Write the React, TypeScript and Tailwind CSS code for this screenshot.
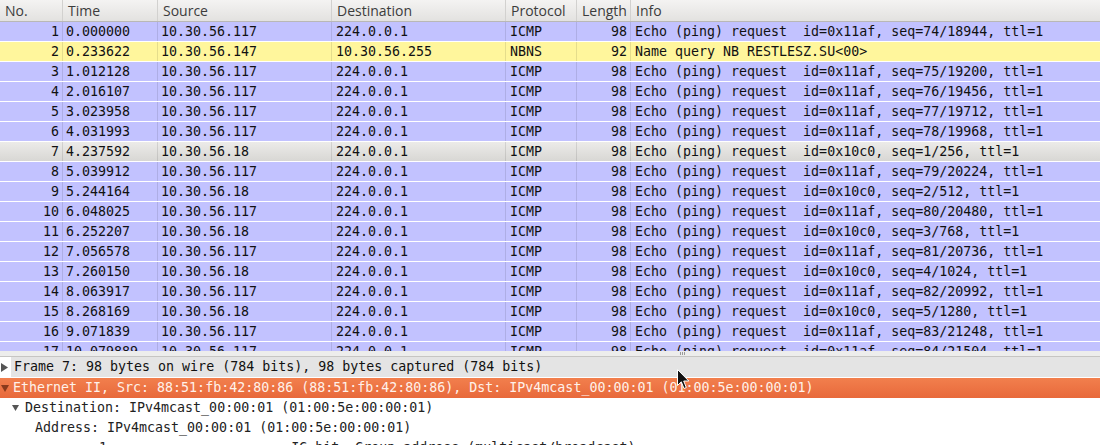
import React from "react";

type Row = { no: number; time: string; src: string; dst: string; proto: string; len: number; info: string; kind: "icmp" | "nbns" | "sel" };

const rows: Row[] = [
  { no: 1, time: "0.000000", src: "10.30.56.117", dst: "224.0.0.1", proto: "ICMP", len: 98, info: "Echo (ping) request  id=0x11af, seq=74/18944, ttl=1", kind: "icmp" },
  { no: 2, time: "0.233622", src: "10.30.56.147", dst: "10.30.56.255", proto: "NBNS", len: 92, info: "Name query NB RESTLESZ.SU<00>", kind: "nbns" },
  { no: 3, time: "1.012128", src: "10.30.56.117", dst: "224.0.0.1", proto: "ICMP", len: 98, info: "Echo (ping) request  id=0x11af, seq=75/19200, ttl=1", kind: "icmp" },
  { no: 4, time: "2.016107", src: "10.30.56.117", dst: "224.0.0.1", proto: "ICMP", len: 98, info: "Echo (ping) request  id=0x11af, seq=76/19456, ttl=1", kind: "icmp" },
  { no: 5, time: "3.023958", src: "10.30.56.117", dst: "224.0.0.1", proto: "ICMP", len: 98, info: "Echo (ping) request  id=0x11af, seq=77/19712, ttl=1", kind: "icmp" },
  { no: 6, time: "4.031993", src: "10.30.56.117", dst: "224.0.0.1", proto: "ICMP", len: 98, info: "Echo (ping) request  id=0x11af, seq=78/19968, ttl=1", kind: "icmp" },
  { no: 7, time: "4.237592", src: "10.30.56.18", dst: "224.0.0.1", proto: "ICMP", len: 98, info: "Echo (ping) request  id=0x10c0, seq=1/256, ttl=1", kind: "sel" },
  { no: 8, time: "5.039912", src: "10.30.56.117", dst: "224.0.0.1", proto: "ICMP", len: 98, info: "Echo (ping) request  id=0x11af, seq=79/20224, ttl=1", kind: "icmp" },
  { no: 9, time: "5.244164", src: "10.30.56.18", dst: "224.0.0.1", proto: "ICMP", len: 98, info: "Echo (ping) request  id=0x10c0, seq=2/512, ttl=1", kind: "icmp" },
  { no: 10, time: "6.048025", src: "10.30.56.117", dst: "224.0.0.1", proto: "ICMP", len: 98, info: "Echo (ping) request  id=0x11af, seq=80/20480, ttl=1", kind: "icmp" },
  { no: 11, time: "6.252207", src: "10.30.56.18", dst: "224.0.0.1", proto: "ICMP", len: 98, info: "Echo (ping) request  id=0x10c0, seq=3/768, ttl=1", kind: "icmp" },
  { no: 12, time: "7.056578", src: "10.30.56.117", dst: "224.0.0.1", proto: "ICMP", len: 98, info: "Echo (ping) request  id=0x11af, seq=81/20736, ttl=1", kind: "icmp" },
  { no: 13, time: "7.260150", src: "10.30.56.18", dst: "224.0.0.1", proto: "ICMP", len: 98, info: "Echo (ping) request  id=0x10c0, seq=4/1024, ttl=1", kind: "icmp" },
  { no: 14, time: "8.063917", src: "10.30.56.117", dst: "224.0.0.1", proto: "ICMP", len: 98, info: "Echo (ping) request  id=0x11af, seq=82/20992, ttl=1", kind: "icmp" },
  { no: 15, time: "8.268169", src: "10.30.56.18", dst: "224.0.0.1", proto: "ICMP", len: 98, info: "Echo (ping) request  id=0x10c0, seq=5/1280, ttl=1", kind: "icmp" },
  { no: 16, time: "9.071839", src: "10.30.56.117", dst: "224.0.0.1", proto: "ICMP", len: 98, info: "Echo (ping) request  id=0x11af, seq=83/21248, ttl=1", kind: "icmp" },
  { no: 17, time: "10.079889", src: "10.30.56.117", dst: "224.0.0.1", proto: "ICMP", len: 98, info: "Echo (ping) request  id=0x11af, seq=84/21504, ttl=1", kind: "icmp" },
];

const bgFor: Record<Row["kind"], string> = {
  icmp: "bg-[#c2c2ff]",
  nbns: "bg-[#fff69c]",
  sel: "bg-gradient-to-b from-[#ecebe9] to-[#d8d7d4]",
};

const sep = "border-r border-black/10";

function HeaderCell({ w, label, last }: { w: string; label: string; last?: boolean }) {
  return (
    <div className={`${w} h-full flex items-center pl-[5px] ${last ? "" : "border-r border-[#d2d1cf]"}`}>
      {label}
    </div>
  );
}

function Cursor() {
  return (
    <svg className="absolute left-[677px] top-[369px]" width="13" height="21" viewBox="0 0 13 21">
      <path d="M0.5 0.5 L0.5 16.5 L4.3 12.8 L7 19.5 L9.3 18.5 L6.7 12 L11.8 12 Z" fill="#111" stroke="#fff" strokeWidth="1" strokeLinejoin="round" />
    </svg>
  );
}

export default function App() {
  return (
    <div className="relative w-[1100px] h-[445px] overflow-hidden bg-white text-black">
      {/* Packet list */}
      <div className="h-[351px] overflow-hidden flex flex-col">
        <div className="h-[22px] shrink-0 flex bg-gradient-to-b from-[#f4f3f2] to-[#e3e2e0] border-b border-[#b9b8b6] text-[14px] text-[#3c3c3c] font-['Open_Sans',sans-serif] leading-none">
          <HeaderCell w="w-[63px]" label="No." />
          <HeaderCell w="w-[95px]" label="Time" />
          <HeaderCell w="w-[174px]" label="Source" />
          <HeaderCell w="w-[174px]" label="Destination" />
          <HeaderCell w="w-[71px]" label="Protocol" />
          <HeaderCell w="w-[54px]" label="Length" />
          <HeaderCell w="flex-1" label="Info" last />
        </div>
        <div className="font-['DejaVu_Sans_Mono',monospace] text-[13.3px] leading-[19px] text-[#111]">
          {rows.map((r) => (
            <div key={r.no} className={`flex h-[20px] border-b border-white whitespace-pre ${bgFor[r.kind]}`}>
              <div className={`w-[63px] text-right pr-[3px] ${sep}`}>{r.no}</div>
              <div className={`w-[95px] pl-[3px] ${sep}`}>{r.time}</div>
              <div className={`w-[174px] pl-[3px] ${sep}`}>{r.src}</div>
              <div className={`w-[174px] pl-[4px] ${sep}`}>{r.dst}</div>
              <div className={`w-[71px] pl-[4px] ${sep}`}>{r.proto}</div>
              <div className={`w-[54px] text-right pr-[3px] ${sep}`}>{r.len}</div>
              <div className="flex-1 pl-[4px]">{r.info}</div>
            </div>
          ))}
        </div>
      </div>

      {/* Splitter */}
      <div className="h-[6px] bg-[#ededec] border-b border-[#c6c5c3] flex justify-start">
        <div className="ml-[680px] mt-[1px] flex gap-[1px]">
          <div className="w-[1px] h-[3px] bg-[#9a9a9a]" />
          <div className="w-[1px] h-[3px] bg-[#9a9a9a]" />
          <div className="w-[1px] h-[3px] bg-[#9a9a9a]" />
        </div>
      </div>

      {/* Packet details */}
      <div className="font-['DejaVu_Sans_Mono',monospace] text-[13.3px] leading-[20px] whitespace-pre">
        <div className="flex h-[20px]">
          <div className="w-[11px] flex items-center pl-[1px] text-[#444]">
            <svg width="7" height="9" viewBox="0 0 7 9"><path d="M0 0 L7 4.5 L0 9 Z" fill="#555" /></svg>
          </div>
          <div className="flex-1 bg-[#e4e4e4] pl-[3px] text-[#111]">Frame 7: 98 bytes on wire (784 bits), 98 bytes captured (784 bits)</div>
        </div>
        <div className="flex h-[20px] mt-[1px] bg-gradient-to-b from-[#f27f4d] to-[#e8693b] text-[#fff1ea]">
          <div className="w-[11px] flex items-center pl-[1px]">
            <svg width="8" height="7" viewBox="0 0 8 7"><path d="M0 0 L8 0 L4 7 Z" fill="#8a3a1c" /></svg>
          </div>
          <div className="flex-1 pl-[2px]">Ethernet II, Src: 88:51:fb:42:80:86 (88:51:fb:42:80:86), Dst: IPv4mcast_00:00:01 (01:00:5e:00:00:01)</div>
        </div>
        <div className="flex h-[20px] text-[#222]">
          <div className="w-[22px] flex items-center pl-[12px]">
            <svg width="7" height="6" viewBox="0 0 7 6"><path d="M0 0 L7 0 L3.5 6 Z" fill="#555" /></svg>
          </div>
          <div className="pl-[3px]">Destination: IPv4mcast_00:00:01 (01:00:5e:00:00:01)</div>
        </div>
        <div className="h-[20px] pl-[35px] text-[#222]">Address: IPv4mcast_00:00:01 (01:00:5e:00:00:01)</div>
        <div className="h-[20px] pl-[35px] text-[#222]">.... ...1 .... .... .... .... = IG bit: Group address (multicast/broadcast)</div>
      </div>

      <Cursor />
    </div>
  );
}
